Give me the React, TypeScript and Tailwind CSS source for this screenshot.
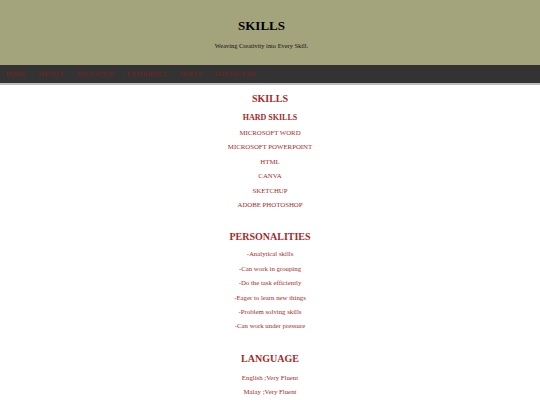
import React from "react";

const navItems = ["HOME", "MYSELF", "EDUCATION", "EXPERIENCE", "SKILLS", "CONTACT ME"];

const hardSkills = [
  "MICROSOFT WORD",
  "MICROSOFT POWERPOINT",
  "HTML",
  "CANVA",
  "SKETCHUP",
  "ADOBE PHOTOSHOP",
];

const personalities = [
  "-Analytical skills",
  "-Can work in grouping",
  "-Do the task efficiently",
  "-Eager to learn new things",
  "-Problem solving skills",
  "-Can work under pressure",
];

const languages = ["English ;Very Fluent", "Malay ;Very Fluent"];

const Item: React.FC<{ text: string }> = ({ text }) => (
  <p className="text-[6.8px] leading-[14.4px] text-[#a52a2a]">{text}</p>
);

export default function App() {
  return (
    <div className="min-h-screen bg-white font-['Liberation_Serif',serif]">
      {/* Header */}
      <header className="h-[65px] bg-[#a3a47b] flex flex-col items-center pt-[17px] pr-[17px]">
        <h1 className="text-[13px] font-bold leading-[18px] text-black">SKILLS</h1>
        <p className="mt-[2px] text-[6.4px] leading-[18px] text-[#111]">
          Weaving Creativity into Every Skill.
        </p>
      </header>

      {/* Nav */}
      <nav className="h-[20px] bg-[#333333] border-b-[2px] border-[#bdbdbd] flex items-center gap-[13px] px-[6px]">
        {navItems.map((n) => (
          <span key={n} className="text-[6.5px] leading-[18px] text-[#7d2020]">
            {n}
          </span>
        ))}
      </nav>

      {/* Content */}
      <main className="flex flex-col items-center text-center pt-[7px]">
        <h2 className="text-[10px] font-bold leading-[14px] text-[#a52a2a]">SKILLS</h2>
        <h3 className="mt-[5px] text-[8px] font-bold leading-[14px] text-[#a52a2a]">
          HARD SKILLS
        </h3>
        <div className="mt-[1px] flex flex-col">
          {hardSkills.map((s) => (
            <Item key={s} text={s} />
          ))}
        </div>

        <h2 className="mt-[18px] text-[10px] font-bold leading-[14px] text-[#a52a2a]">
          PERSONALITIES
        </h2>
        <div className="mt-[3px] flex flex-col">
          {personalities.map((s) => (
            <Item key={s} text={s} />
          ))}
        </div>

        <h2 className="mt-[18px] text-[10px] font-bold leading-[14px] text-[#a52a2a]">
          LANGUAGE
        </h2>
        <div className="mt-[5px] flex flex-col">
          {languages.map((s) => (
            <Item key={s} text={s} />
          ))}
        </div>
      </main>
    </div>
  );
}
